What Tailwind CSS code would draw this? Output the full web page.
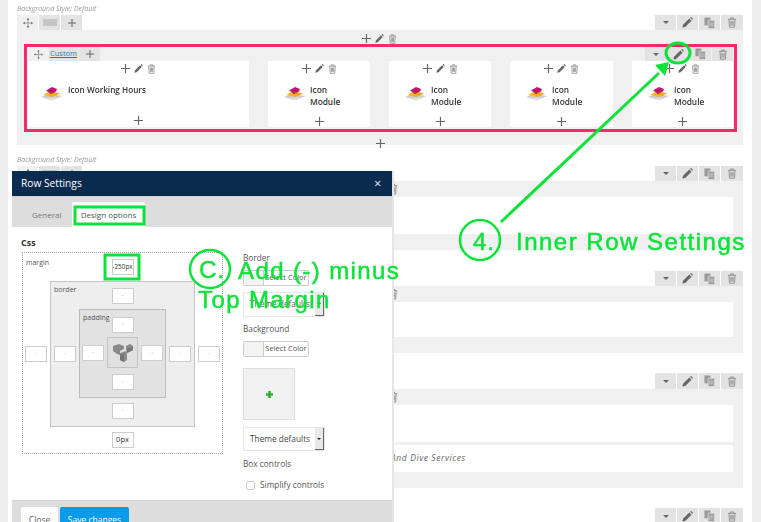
<!DOCTYPE html>
<html lang="en">
<head>
  <meta charset="UTF-8">
  <meta name="viewport" content="width=device-width, initial-scale=1">
  <title>Row Settings</title>
  <script src="https://cdn.jsdelivr.net/npm/@tailwindcss/browser@4"></script>
</head>
<body class="relative h-[522px] w-[761px] overflow-hidden bg-white font-['Open_Sans',sans-serif] text-[#444] blur-[0.45px]">
  <!-- icon set -->
  <svg class="absolute size-0">
    <defs>
      <linearGradient id="logo-fade" x1="0" y1="0" x2="0" y2="1"><stop offset="0" stop-color="#b5b5b5"/><stop offset="1" stop-color="#f2f2f2"/></linearGradient>
      <linearGradient id="logo-orange" x1="0" y1="0" x2="1" y2="0"><stop offset="0" stop-color="#f7c52c"/><stop offset="1" stop-color="#f09a12"/></linearGradient>
    </defs>
    <symbol id="i-plus" viewBox="0 0 10 10"><path d="M5 0v10M0 5h10" fill="none" stroke="currentColor" stroke-width="1.3"/></symbol>
    <symbol id="i-pencil" viewBox="0 0 12 12"><path d="M0.5 11.5l.6-3L8 1.6l2.4 2.4-6.9 6.9zM8.8 0.9l.7-.6c.3-.2.6-.2.9 0l1.2 1.2c.2.3.2.6 0 .9l-.6.7z" fill="currentColor"/></symbol>
    <symbol id="i-trash" viewBox="0 0 12 14"><path d="M1 3h10M4.2 3V1.2h3.6V3M2.2 3l.6 10h6.4l.6-10M4.5 5v6M6 5v6M7.5 5v6" fill="none" stroke="currentColor" stroke-width="1.1"/></symbol>
    <symbol id="i-copy" viewBox="0 0 12 13"><path d="M0.5 0.5h6.500v8.500H0.500z" fill="currentColor"/><path d="M4.500 3.500h7v9h-7z" fill="currentColor" stroke="#e3e3e3" stroke-width=".8"/><path d="M6.300 5.500v5M8 5.500v5M9.700 5.500v5" stroke="#e3e3e3" stroke-width=".6"/></symbol>
    <symbol id="i-move" viewBox="0 0 14 14"><path d="M7 1v12M1 7h12" stroke="currentColor" stroke-width=".8" fill="none"/><path d="M7 0l2 2.400H5zM7 14l2-2.400H5zM0 7l2.400-2v4zM14 7l-2.400-2v4z" fill="currentColor"/></symbol>
    <symbol id="i-logo" viewBox="0 0 21 15">
      <path d="M0 11l8-3 13 2-10 5z" fill="url(#logo-fade)"/>
      <path d="M2 9l7-4 10 2.500-8 3.500z" fill="url(#logo-orange)"/>
      <path d="M5 4.500l6-3.500 5 2-1 2.500-5 1.500z" fill="#c2146a"/>
      <path d="M5 4.500l5 2.500 5-1.500-5 2.500z" fill="#8e1553"/>
    </symbol>
    <symbol id="i-caret" viewBox="0 0 8 4"><path d="M0 0h8L4 4z" fill="currentColor"/></symbol>
  </svg>

  <div class="flex h-full">
    <div class="w-2 shrink-0 bg-[#eeeeee]"></div>

    <!-- rows behind the dialog -->
    <main class="w-[744px] shrink-0 px-[9px]">
      <!-- row 1 -->
      <p class="h-[15px] pt-[4px] text-[7px] leading-[10px] text-[#999] italic">Background Style: Default</p>
      <div class="flex h-[15px] justify-between">
        <div class="flex gap-px text-[#666]">
          <span class="flex w-[21px] items-center justify-center bg-[#f0f0f0]"><svg class="size-[10px]"><use href="#i-move"/></svg></span>
          <span class="flex w-[21px] items-center justify-center bg-[#e3e3e3]"><span class="h-[7px] w-[14px] bg-[#c4c4c4]"></span></span>
          <span class="flex w-[21px] items-center justify-center bg-[#e3e3e3]"><svg class="size-[8px]"><use href="#i-plus"/></svg></span>
        </div>
        <div class="flex gap-px text-[#666]">
          <span class="flex w-[21px] items-center justify-center bg-[#e3e3e3]"><svg class="h-[3px] w-[6px]"><use href="#i-caret"/></svg></span>
          <span class="flex w-[21px] items-center justify-center bg-[#e3e3e3]"><svg class="size-[11px]"><use href="#i-pencil"/></svg></span>
          <span class="flex w-[21px] items-center justify-center bg-[#e3e3e3] text-[#999]"><svg class="h-[12px] w-[11px]"><use href="#i-copy"/></svg></span>
          <span class="flex w-[22px] items-center justify-center bg-[#e3e3e3] text-[#888]"><svg class="h-[11px] w-[10px]"><use href="#i-trash"/></svg></span>
        </div>
      </div>
      <section class="h-[115px] bg-[#f0f0f0] pr-[10px] pl-[11px]">
        <div class="flex h-[17px] items-center justify-center gap-[4px] pr-[2px] text-[#666]">
          <svg class="size-[9px]"><use href="#i-plus"/></svg>
          <svg class="size-[9px]"><use href="#i-pencil"/></svg>
          <svg class="h-[10px] w-[9px] text-[#888]"><use href="#i-trash"/></svg>
        </div>
        <!-- inner row -->
        <div class="flex h-[14px] justify-between">
          <div class="flex gap-px text-[#666]">
            <span class="flex w-[20px] items-center justify-center"><svg class="size-[9px]"><use href="#i-move"/></svg></span>
            <span class="flex w-[29px] items-center justify-center bg-[#e3e3e3] text-[7.500px] text-[#2a7ab0] underline">Custom</span>
            <span class="flex w-[21px] items-center justify-center bg-[#e3e3e3]"><svg class="size-[8px]"><use href="#i-plus"/></svg></span>
          </div>
          <div class="flex gap-px text-[#666]">
            <span class="flex w-[21px] items-center justify-center bg-[#e3e3e3]"><svg class="h-[3px] w-[6px]"><use href="#i-caret"/></svg></span>
            <span class="flex w-[22px] items-center justify-center bg-[#e3e3e3]"><svg class="size-[11px]"><use href="#i-pencil"/></svg></span>
            <span class="flex w-[21px] items-center justify-center bg-[#e3e3e3] text-[#999]"><svg class="h-[12px] w-[11px]"><use href="#i-copy"/></svg></span>
            <span class="flex w-[21px] items-center justify-center bg-[#e3e3e3] text-[#888]"><svg class="h-[11px] w-[10px]"><use href="#i-trash"/></svg></span>
          </div>
        </div>
        <div class="flex h-[66px] justify-between text-[#666]">
          <div class="flex w-[221px] flex-col items-center bg-white">
            <div class="flex h-[14px] items-center gap-[4px] pt-[1px] pr-[1px]"><svg class="size-[9px]"><use href="#i-plus"/></svg><svg class="size-[9px]"><use href="#i-pencil"/></svg><svg class="h-[10px] w-[9px] text-[#888]"><use href="#i-trash"/></svg></div>
            <div class="flex h-[38px] w-full items-start gap-[6px] pt-[9px] pl-[13px]"><svg class="mt-[2px] h-[15px] w-[21px] shrink-0"><use href="#i-logo"/></svg><span class="text-[8.200px] leading-[11px] font-semibold text-[#333]">Icon Working Hours</span></div>
            <svg class="mt-[3px] size-[9px]"><use href="#i-plus"/></svg>
          </div>
          <div class="ml-[19px] flex w-[102px] flex-col items-center bg-white">
            <div class="flex h-[14px] items-center gap-[4px] pt-[1px]"><svg class="size-[9px]"><use href="#i-plus"/></svg><svg class="size-[9px]"><use href="#i-pencil"/></svg><svg class="h-[10px] w-[9px] text-[#888]"><use href="#i-trash"/></svg></div>
            <div class="flex h-[40px] w-full items-start gap-[5px] pt-[9px] pl-[16px]"><svg class="mt-[2px] h-[15px] w-[21px] shrink-0"><use href="#i-logo"/></svg><span class="text-[8.300px] leading-[11.500px] font-semibold text-[#333]">Icon<br>Module</span></div>
            <svg class="mt-[2px] size-[9px]"><use href="#i-plus"/></svg>
          </div>
          <div class="ml-[19px] flex w-[102px] flex-col items-center bg-white">
            <div class="flex h-[14px] items-center gap-[4px] pt-[1px]"><svg class="size-[9px]"><use href="#i-plus"/></svg><svg class="size-[9px]"><use href="#i-pencil"/></svg><svg class="h-[10px] w-[9px] text-[#888]"><use href="#i-trash"/></svg></div>
            <div class="flex h-[40px] w-full items-start gap-[5px] pt-[9px] pl-[16px]"><svg class="mt-[2px] h-[15px] w-[21px] shrink-0"><use href="#i-logo"/></svg><span class="text-[8.300px] leading-[11.500px] font-semibold text-[#333]">Icon<br>Module</span></div>
            <svg class="mt-[2px] size-[9px]"><use href="#i-plus"/></svg>
          </div>
          <div class="ml-[19px] flex w-[103px] flex-col items-center bg-white">
            <div class="flex h-[14px] items-center gap-[4px] pt-[1px]"><svg class="size-[9px]"><use href="#i-plus"/></svg><svg class="size-[9px]"><use href="#i-pencil"/></svg><svg class="h-[10px] w-[9px] text-[#888]"><use href="#i-trash"/></svg></div>
            <div class="flex h-[40px] w-full items-start gap-[5px] pt-[9px] pl-[16px]"><svg class="mt-[2px] h-[15px] w-[21px] shrink-0"><use href="#i-logo"/></svg><span class="text-[8.300px] leading-[11.500px] font-semibold text-[#333]">Icon<br>Module</span></div>
            <svg class="mt-[2px] size-[9px]"><use href="#i-plus"/></svg>
          </div>
          <div class="ml-[19px] flex w-[101px] flex-col items-center bg-white">
            <div class="flex h-[14px] items-center gap-[4px] pt-[1px]"><svg class="size-[9px]"><use href="#i-plus"/></svg><svg class="size-[9px]"><use href="#i-pencil"/></svg><svg class="h-[10px] w-[9px] text-[#888]"><use href="#i-trash"/></svg></div>
            <div class="flex h-[40px] w-full items-start gap-[5px] pt-[9px] pl-[16px]"><svg class="mt-[2px] h-[15px] w-[21px] shrink-0"><use href="#i-logo"/></svg><span class="text-[8.300px] leading-[11.500px] font-semibold text-[#333]">Icon<br>Module</span></div>
            <svg class="mt-[2px] size-[9px]"><use href="#i-plus"/></svg>
          </div>
        </div>
        <div class="flex h-[18px] items-start justify-center pt-[12px] text-[#666]"><svg class="size-[9px] shrink-0"><use href="#i-plus"/></svg></div>
      </section>

      <!-- row 2 -->
      <p class="h-[21px] pt-[10px] text-[7px] leading-[10px] text-[#999] italic">Background Style: Default</p>
      <div class="flex h-[15px] justify-between">
        <div class="flex gap-px text-[#666]">
          <span class="flex w-[21px] items-center justify-center bg-[#f0f0f0]"><svg class="size-[10px]"><use href="#i-move"/></svg></span>
          <span class="flex w-[21px] items-center justify-center bg-[#e3e3e3]"><span class="h-[7px] w-[14px] bg-[#c4c4c4]"></span></span>
          <span class="flex w-[21px] items-center justify-center bg-[#e3e3e3]"><svg class="size-[8px]"><use href="#i-plus"/></svg></span>
        </div>
        <div class="flex gap-px text-[#666]">
          <span class="flex w-[21px] items-center justify-center bg-[#e3e3e3]"><svg class="h-[3px] w-[6px]"><use href="#i-caret"/></svg></span>
          <span class="flex w-[21px] items-center justify-center bg-[#e3e3e3]"><svg class="size-[11px]"><use href="#i-pencil"/></svg></span>
          <span class="flex w-[21px] items-center justify-center bg-[#e3e3e3] text-[#999]"><svg class="h-[12px] w-[11px]"><use href="#i-copy"/></svg></span>
          <span class="flex w-[22px] items-center justify-center bg-[#e3e3e3] text-[#888]"><svg class="h-[11px] w-[10px]"><use href="#i-trash"/></svg></span>
        </div>
      </div>
      <section class="relative h-[69px] bg-[#f0f0f0] pt-[16px] pr-[10px] pl-[11px]">
        <div class="h-[37px] rounded-[1px] bg-white"></div>
        <svg class="absolute top-[2px] left-[371px] h-[12px] w-[10px] text-[#888]"><use href="#i-trash"/></svg>
      </section>

      <!-- row 3 -->
      <div class="mt-[21px] flex h-[15px] justify-end gap-px text-[#666]">
        <span class="flex w-[21px] items-center justify-center bg-[#e3e3e3]"><svg class="h-[3px] w-[6px]"><use href="#i-caret"/></svg></span>
        <span class="flex w-[21px] items-center justify-center bg-[#e3e3e3]"><svg class="size-[11px]"><use href="#i-pencil"/></svg></span>
        <span class="flex w-[21px] items-center justify-center bg-[#e3e3e3] text-[#999]"><svg class="h-[12px] w-[11px]"><use href="#i-copy"/></svg></span>
        <span class="flex w-[22px] items-center justify-center bg-[#e3e3e3] text-[#888]"><svg class="h-[11px] w-[10px]"><use href="#i-trash"/></svg></span>
      </div>
      <section class="relative h-[67px] bg-[#f0f0f0] pt-[16px] pr-[10px] pl-[11px]">
        <div class="h-[35px] rounded-[1px] bg-white"></div>
        <svg class="absolute top-[2px] left-[371px] h-[12px] w-[10px] text-[#888]"><use href="#i-trash"/></svg>
      </section>

      <!-- row 4 -->
      <div class="mt-[20px] flex h-[16px] justify-end gap-px text-[#666]">
        <span class="flex w-[21px] items-center justify-center bg-[#e3e3e3]"><svg class="h-[3px] w-[6px]"><use href="#i-caret"/></svg></span>
        <span class="flex w-[21px] items-center justify-center bg-[#e3e3e3]"><svg class="size-[11px]"><use href="#i-pencil"/></svg></span>
        <span class="flex w-[21px] items-center justify-center bg-[#e3e3e3] text-[#999]"><svg class="h-[12px] w-[11px]"><use href="#i-copy"/></svg></span>
        <span class="flex w-[22px] items-center justify-center bg-[#e3e3e3] text-[#888]"><svg class="h-[11px] w-[10px]"><use href="#i-trash"/></svg></span>
      </div>
      <section class="relative h-[99px] bg-[#f0f0f0] pt-[16px] pr-[10px] pl-[11px]">
        <div class="h-[37px] rounded-[1px] bg-white"></div>
        <div class="mt-[3px] flex h-[27px] items-center rounded-[1px] bg-white pl-[363px] text-[8.500px] tracking-[0.6px] text-[#666] italic">And Dive Services</div>
        <svg class="absolute top-[2px] left-[371px] h-[12px] w-[10px] text-[#888]"><use href="#i-trash"/></svg>
      </section>

      <!-- row 5 -->
      <div class="mt-[20px] flex h-[16px] justify-end gap-px text-[#666]">
        <span class="flex w-[21px] items-center justify-center bg-[#e3e3e3]"><svg class="h-[3px] w-[6px]"><use href="#i-caret"/></svg></span>
        <span class="flex w-[21px] items-center justify-center bg-[#e3e3e3]"><svg class="size-[11px]"><use href="#i-pencil"/></svg></span>
        <span class="flex w-[21px] items-center justify-center bg-[#e3e3e3] text-[#999]"><svg class="h-[12px] w-[11px]"><use href="#i-copy"/></svg></span>
        <span class="flex w-[22px] items-center justify-center bg-[#e3e3e3] text-[#888]"><svg class="h-[11px] w-[10px]"><use href="#i-trash"/></svg></span>
      </div>
    </main>

    <div class="flex-1 bg-[#eeeeee]"></div>
  </div>

  <!-- Row Settings dialog -->
  <div class="absolute top-[171px] left-[12px] z-10 w-[382px] border-r-2 border-[#e6e6e6] bg-white">
    <div class="flex h-[25px] items-center justify-between bg-[#0a2a4e] pt-[1px] pr-[11px] pl-[9px] text-white">
      <span class="text-[10.200px]">Row Settings</span>
      <span class="text-[12px] leading-none">×</span>
    </div>
    <div class="flex h-[31px] items-end border-t border-[#cfcfcf] bg-[#dddddd] pl-[20px] text-[8px]">
      <span class="flex h-[25px] w-[40px] items-center text-[#777]">General</span>
      <span class="flex h-[25px] w-[73px] items-center justify-center rounded-t-[2px] bg-white text-[#555]">Design options</span>
    </div>

    <div class="h-[273px] pl-[10px]">
      <p class="-ml-px h-[25px] pt-[10px] text-[9px] leading-[12px] font-bold text-[#333]">Css</p>
      <div class="flex gap-[20px]">
        <!-- box model -->
        <div class="relative flex h-[202px] w-[201px] flex-col items-center border border-dotted border-[#aaaaaa] pt-[6px]">
          <span class="absolute top-[5px] left-[3px] text-[7px] leading-[9px] text-[#555]">margin</span>
          <span class="flex h-[16px] w-[22px] items-center justify-center border border-[#cccccc] bg-white text-[6.400px] whitespace-nowrap text-[#333]">-250px</span>
          <div class="mt-[6px] flex items-center gap-[3px]">
            <span class="flex h-[16px] w-[22px] items-center justify-center border border-[#cccccc] bg-white text-[5px] text-[#999]">-</span>
            <div class="relative flex h-[146px] w-[145px] flex-col items-center border border-[#c4c4c4] bg-[#eeeeee] pt-[6px]">
              <span class="absolute top-[3px] left-[3px] text-[7px] leading-[9px] text-[#555]">border</span>
              <span class="flex h-[16px] w-[22px] items-center justify-center border border-[#cccccc] bg-white text-[5px] text-[#999]">-</span>
              <div class="mt-[5px] flex items-center gap-[3px]">
                <span class="flex h-[16px] w-[22px] items-center justify-center border border-[#cccccc] bg-white text-[5px] text-[#999]">-</span>
                <div class="relative flex h-[89px] w-[87px] flex-col items-center border border-[#bbbbbb] bg-[#e2e2e2] pt-[7px]">
                  <span class="absolute top-[3px] left-[3px] text-[7px] leading-[9px] text-[#555]">padding</span>
                  <span class="flex h-[16px] w-[22px] items-center justify-center border border-[#cccccc] bg-white text-[5px] text-[#999]">-</span>
                  <div class="mt-[4px] flex items-center gap-[3px]">
                    <span class="flex h-[16px] w-[22px] items-center justify-center border border-[#cccccc] bg-white text-[5px] text-[#999]">-</span>
                    <div class="flex size-[31px] items-center justify-center border border-[#c4c4c4] bg-[#e0e0e0]">
                      <svg class="h-[20px] w-[20px]" viewBox="0 0 20 20"><path d="M0 3l6-2 5 2v3L7 8v4L4 11 0 8zM13 3l4-2 3 2v4l-6 3-1-4zM7 10l6-2 1 2v7l-3 2-4-2z" fill="#8a8a8a"/><path d="M7 12v5l4 2v-9zM14 6l6-2v3l-6 3z" fill="#747474"/></svg>
                    </div>
                    <span class="flex h-[16px] w-[22px] items-center justify-center border border-[#cccccc] bg-white text-[5px] text-[#999]">-</span>
                  </div>
                  <span class="mt-[6px] flex h-[16px] w-[22px] items-center justify-center border border-[#cccccc] bg-white text-[5px] text-[#999]">-</span>
                </div>
                <span class="flex h-[16px] w-[22px] items-center justify-center border border-[#cccccc] bg-white text-[5px] text-[#999]">-</span>
              </div>
              <span class="mt-[5px] flex h-[16px] w-[22px] items-center justify-center border border-[#cccccc] bg-white text-[5px] text-[#999]">-</span>
            </div>
            <span class="flex h-[16px] w-[22px] items-center justify-center border border-[#cccccc] bg-white text-[5px] text-[#999]">-</span>
          </div>
          <span class="mt-[5px] flex h-[16px] w-[22px] items-center justify-center border border-[#cccccc] bg-white text-[7.500px] text-[#333]">0px</span>
        </div>

        <!-- border, background, box controls -->
        <div class="w-[82px] text-[8.300px] text-[#555]">
          <p class="leading-[12px]">Border</p>
          <div class="mt-[6px] flex h-[16px] w-[66px] rounded-[2px] border border-[#cccccc]">
            <span class="w-[20px] border-r border-[#cccccc] bg-[#f3f3f3]"></span>
            <span class="flex flex-1 items-center justify-center text-[7.500px]">Select Color</span>
          </div>
          <div class="mt-[6px] flex h-[25px] items-center justify-between border border-[#e6e6e6] pl-[6px]">
            <span>Theme defaults</span>
            <span class="flex h-full w-[9px] items-center justify-center border-r border-b border-[#666] bg-[#e8e8e8] text-[#222]"><svg class="h-[2px] w-[4px]"><use href="#i-caret"/></svg></span>
          </div>
          <p class="mt-[6px] leading-[12px]">Background</p>
          <div class="mt-[6px] flex h-[16px] w-[66px] rounded-[2px] border border-[#cccccc]">
            <span class="w-[20px] border-r border-[#cccccc] bg-[#f3f3f3]"></span>
            <span class="flex flex-1 items-center justify-center text-[7.500px]">Select Color</span>
          </div>
          <div class="mt-[11px] flex size-[52px] items-center justify-center border border-[#dddddd] bg-[#f1f1f1]">
            <svg class="size-[7px]" viewBox="0 0 7 7"><path d="M2.200 0h2.600v2.200H7v2.600H4.800V7H2.200V4.800H0V2.200h2.200z" fill="#2fb12f"/></svg>
          </div>
          <div class="mt-[7px] flex h-[24px] items-center justify-between border border-[#e6e6e6] pl-[6px] text-[#444]">
            <span>Theme defaults</span>
            <span class="flex h-full w-[9px] items-center justify-center border-r border-b border-[#666] bg-[#e8e8e8] text-[#222]"><svg class="h-[2px] w-[4px]"><use href="#i-caret"/></svg></span>
          </div>
          <p class="mt-[7px] leading-[12px]">Box controls</p>
          <label class="mt-[9px] flex h-[12px] items-center gap-[5px] pl-[3px] whitespace-nowrap">
            <span class="size-[9px] rounded-[2px] border border-[#cccccc] bg-white"></span>Simplify controls
          </label>
        </div>
      </div>
    </div>

    <div class="flex h-[40px] gap-[2px] border-t border-[#d4d4d4] bg-[#dddddd] pt-[6px] pl-[9px] text-[8.500px]">
      <span class="flex h-[30px] w-[37px] justify-center rounded-[2px] bg-white pt-[7px] text-[#666]">Close</span>
      <span class="flex h-[30px] w-[69px] justify-center rounded-[2px] bg-[#0a9bea] pt-[7px] text-white">Save changes</span>
    </div>
  </div>

  <!-- annotations drawn over the screenshot -->
  <svg class="absolute inset-0 z-20" width="761" height="522" fill="none">
    <rect x="25.500" y="45.500" width="710" height="85" stroke="#f8296b" stroke-width="3"/>
    <rect x="75" y="207" width="69" height="17" stroke="#0de23a" stroke-width="3"/>
    <rect x="105" y="255" width="34" height="24" stroke="#0de23a" stroke-width="3"/>
    <ellipse cx="678" cy="53" rx="12" ry="10" stroke="#0de23a" stroke-width="3"/>
    <ellipse cx="210" cy="269" rx="20" ry="19" stroke="#0de23a" stroke-width="2.500"/>
    <circle cx="480" cy="240" r="20" stroke="#0de23a" stroke-width="2.500"/>
    <path d="M501 222L659 73" stroke="#0de23a" stroke-width="3"/>
    <path d="M669 62L665 76L655 65z" fill="#0de23a"/>
  </svg>
  <span class="absolute top-[255px] left-[199px] z-20 font-['Liberation_Sans',sans-serif] text-[24px] leading-[30px] tracking-[1px] text-[#0de23a] [-webkit-text-stroke:0.5px_#0de23a]">C.</span>
  <span class="absolute top-[256px] left-[238px] z-20 font-['Liberation_Sans',sans-serif] text-[24px] leading-[30px] tracking-[1.400px] whitespace-nowrap text-[#0de23a] [-webkit-text-stroke:0.5px_#0de23a]">Add (-) minus</span>
  <span class="absolute top-[285px] left-[198px] z-20 font-['Liberation_Sans',sans-serif] text-[24px] leading-[30px] tracking-[1.400px] whitespace-nowrap text-[#0de23a] [-webkit-text-stroke:0.5px_#0de23a]">Top Margin</span>
  <span class="absolute top-[227px] left-[473px] z-20 font-['Liberation_Sans',sans-serif] text-[24px] leading-[30px] tracking-[1px] text-[#0de23a] [-webkit-text-stroke:0.5px_#0de23a]">4.</span>
  <span class="absolute top-[227px] left-[516px] z-20 font-['Liberation_Sans',sans-serif] text-[24px] leading-[30px] tracking-[1.500px] whitespace-nowrap text-[#0de23a] [-webkit-text-stroke:0.5px_#0de23a]">Inner Row Settings</span>
</body>
</html>
